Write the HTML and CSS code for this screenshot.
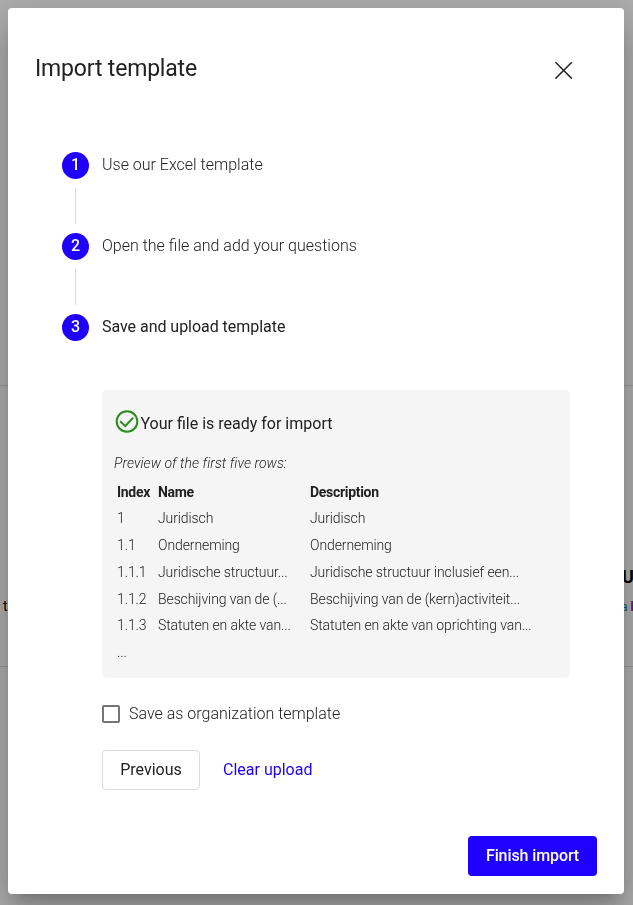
FILE: index.html
```html
<!DOCTYPE html>
<html lang="en">
  <head>
    <meta charset="UTF-8" />
    <meta name="viewport" content="width=device-width, initial-scale=1.0" />
    <title>Import template</title>
    <link rel="stylesheet" href="styles.css">
  </head>
  <body>
    <div class="page">
      <div class="page-section"></div>
      <div class="page-section page-row">
        <span class="page-left">t</span>
        <div class="page-right">
          <strong>U</strong>
          <p><a class="teal">a</a> <a class="purple">l</a></p>
        </div>
      </div>
    </div>

    <div class="backdrop">
      <div class="dialog">
        <header>
          <h1>Import template</h1>
          <button class="close-button" aria-label="Close">
            <svg width="18" height="18" viewBox="0 0 18 18">
              <path d="M0.4 1.2 L16.8 17.6 M16.8 1.2 L0.4 17.6" />
            </svg>
          </button>
        </header>

        <main>
          <ol class="steps">
            <li><span class="step-number">1</span><span class="step-label">Use our Excel template</span></li>
            <li><span class="step-number">2</span><span class="step-label">Open the file and add your questions</span></li>
            <li class="active"><span class="step-number">3</span><span class="step-label">Save and upload template</span></li>
          </ol>

          <div class="step-content">
            <div class="preview">
              <div class="preview-title">
                <svg width="24" height="24" viewBox="0 0 24 24">
                  <circle cx="12" cy="11.5" r="10.3" />
                  <path d="M5.1 11.2 L10.3 16 L18.2 7.6" />
                </svg>
                <h2>Your file is ready for import</h2>
              </div>
              <p class="preview-note">Preview of the first five rows:</p>
              <table>
                <thead>
                  <tr><th>Index</th><th>Name</th><th>Description</th></tr>
                </thead>
                <tbody>
                  <tr><td>1</td><td>Juridisch</td><td>Juridisch</td></tr>
                  <tr><td>1.1</td><td>Onderneming</td><td>Onderneming</td></tr>
                  <tr><td>1.1.1</td><td>Juridische structuur...</td><td>Juridische structuur inclusief een...</td></tr>
                  <tr><td>1.1.2</td><td>Beschijving van de (...</td><td>Beschijving van de (kern)activiteit...</td></tr>
                  <tr><td>1.1.3</td><td>Statuten en akte van...</td><td>Statuten en akte van oprichting van...</td></tr>
                  <tr><td>...</td><td></td><td></td></tr>
                </tbody>
              </table>
            </div>

            <label class="save-option">
              <input type="checkbox" />
              <span>Save as organization template</span>
            </label>

            <div class="step-actions">
              <button class="outline-button">Previous</button>
              <button class="text-button">Clear upload</button>
            </div>
          </div>
        </main>

        <footer>
          <button class="primary-button">Finish import</button>
        </footer>
      </div>
    </div>
  </body>
</html>
```

FILE: styles.css
```css
* {
  box-sizing: border-box;
}

body,
h1,
h2,
p,
ol,
button {
  margin: 0;
  padding: 0;
}

body {
  height: 905px;
  overflow: hidden;
  font-family: Roboto, sans-serif;
  font-size: 16px;
  font-weight: 300;
  color: #212121;
  background-color: #fff;
}

button {
  font-family: inherit;
  font-size: 16px;
  font-weight: 400;
  border: none;
  background: none;
  cursor: pointer;
}

/* page behind the dialog */
.page-section {
  height: 386px;
  border-bottom: 1px solid #e0e0e0;
}

.page-row {
  height: 281px;
  padding: 180px 0 0 3px;
  display: flex;
  justify-content: space-between;
  font-size: 14px;
  font-weight: 400;
  color: #000;
}

.page-left {
  padding-top: 32px;
}

.page-right {
  width: 11px;
  white-space: nowrap;
}

.page-right strong {
  font-size: 18px;
  line-height: 22px;
}

.page-right p {
  margin: 9px 0 0 -1px;
  font-size: 12px;
  line-height: 20px;
}

.teal {
  color: #1b7895;
}

.purple {
  color: #a0108a;
  font-weight: 700;
}

.backdrop {
  position: fixed;
  inset: 0;
  padding: 8px;
  background-color: rgba(0, 0, 0, 0.32);
}

.dialog {
  width: 616px;
  height: 886px;
  display: flex;
  flex-direction: column;
  background-color: #fff;
  border-radius: 4px;
  box-shadow: 0 11px 15px -7px rgba(0, 0, 0, 0.2),
    0 24px 38px 3px rgba(0, 0, 0, 0.14), 0 9px 46px 8px rgba(0, 0, 0, 0.12);
}

header {
  display: flex;
  justify-content: space-between;
  padding: 45px 51px 0 27px;
}

h1 {
  font-size: 23px;
  font-weight: 400;
  line-height: 32px;
  letter-spacing: -0.18px;
}

.close-button {
  width: 18px;
  height: 18px;
  margin-top: 8px;
}

.close-button svg {
  display: block;
  fill: none;
  stroke: #212121;
  stroke-width: 1.5;
}

.steps {
  list-style: none;
  padding: 67px 54px 0;
}

.steps li {
  display: grid;
  grid-template-columns: 27px 1fr;
  column-gap: 13px;
}

.steps li:not(:last-child)::after {
  content: "";
  width: 1px;
  height: 36px;
  margin: 9px 0 9px 13px;
  background-color: #dcdcdc;
}

.step-number {
  height: 27px;
  border-radius: 50%;
  line-height: 26px;
  text-align: center;
  font-weight: 500;
  color: #fff;
  background-color: #1f00ff;
}

.step-label {
  line-height: 26px;
}

.active .step-label {
  font-weight: 400;
  letter-spacing: -0.04px;
}

.step-content {
  padding: 49px 54px 0 94px;
}

.preview {
  height: 288px;
  padding: 20px 12px 0;
  border-radius: 5px;
  background-color: #f5f5f5;
}

.preview-title {
  display: flex;
  align-items: center;
  height: 24px;
}

.preview-title svg {
  margin-left: 1px;
  fill: none;
  stroke: #2e8b1e;
  stroke-width: 2;
}

h2 {
  padding: 3px 0 0 1.5px;
  font-size: 16px;
  font-weight: 400;
  line-height: 24px;
}

.preview-note {
  margin-top: 19px;
  font-size: 14px;
  font-style: italic;
  line-height: 20px;
  letter-spacing: 0.06px;
}

table {
  margin-top: 5px;
  border-collapse: collapse;
  table-layout: fixed;
  width: 440px;
  font-size: 14px;
  letter-spacing: -0.1px;
}

th,
td {
  height: 26.8px;
  padding: 0 0 0 3px;
  text-align: left;
  white-space: nowrap;
}

th {
  padding-top: 2px;
  font-weight: 700;
  letter-spacing: -0.3px;
}

th:first-child {
  width: 41px;
}

th:nth-child(2) {
  width: 152px;
}

.save-option {
  display: flex;
  align-items: center;
  height: 24px;
  margin-top: 24px;
}

.save-option input {
  appearance: none;
  width: 18px;
  height: 18px;
  margin: 0 9px 0 0;
  border: 2px solid #757575;
  border-radius: 2px;
}

.save-option span {
  padding-bottom: 2px;
}

.step-actions {
  display: flex;
  gap: 23px;
  margin-top: 24px;
}

.outline-button {
  width: 98px;
  height: 40px;
  padding-bottom: 2px;
  border: 1px solid #dcdcdc;
  border-radius: 4px;
  color: #212121;
}

.text-button {
  padding-bottom: 2px;
  color: #1f00ff;
}

footer {
  display: flex;
  justify-content: flex-end;
  margin-top: auto;
  padding: 0 27px 18px;
}

.primary-button {
  width: 129px;
  height: 40px;
  padding-bottom: 2px;
  border-radius: 4px;
  font-weight: 500;
  letter-spacing: -0.1px;
  color: #fff;
  background-color: #1f00ff;
}
```
